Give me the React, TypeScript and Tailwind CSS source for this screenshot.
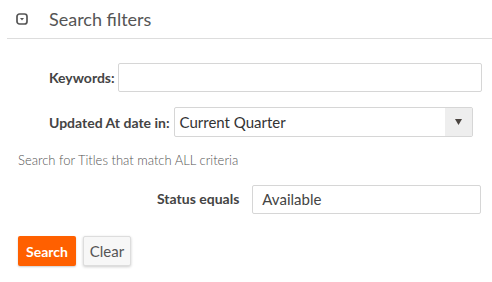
import React from 'react';

const font = { fontFamily: 'Lato, "Open Sans", sans-serif' };

function ToggleIcon() {
  return (
    <svg width="12" height="12" viewBox="0 0 12 12" className="shrink-0">
      <rect x="1" y="1" width="10" height="10" rx="2.5" fill="none" stroke="#555" strokeWidth="1.7" />
      <path d="M4 5 L8 5 L6 7.5 Z" fill="#555" />
    </svg>
  );
}

export default function App() {
  return (
    <div className="w-[492px] h-[282px] bg-white text-[#444]" style={font}>
      <div className="ml-[7px] h-[39px] border-b border-[#ddd] flex items-center">
        <div className="ml-[9px]">
          <ToggleIcon />
        </div>
        <h2 className="ml-[21px] text-[18px] text-[#555] font-normal">Search filters</h2>
      </div>

      <div className="pt-[24px] pl-[49px] flex flex-col">
        <div className="flex items-center gap-[3px] h-[29px]">
          <label className="text-[14px] font-bold text-[#444]">Keywords:</label>
          <input className="w-[364px] h-[29px] border border-[#d6d6d6] rounded-[2px] bg-white outline-none" />
        </div>

        <div className="flex items-center gap-[4px] h-[30px] mt-[15px]">
          <label className="text-[14px] font-bold text-[#444]">Updated At date in:</label>
          <div className="w-[299px] h-[30px] border border-[#d6d6d6] rounded-[2px] flex">
            <div className="flex-1 flex items-center pl-[5px] text-[15px] text-[#333]">Current Quarter</div>
            <div className="w-[27px] bg-[#eee] flex items-center justify-center">
              <svg width="7" height="6" viewBox="0 0 7 6">
                <path d="M0 0 L7 0 L3.5 6 Z" fill="#4a4440" />
              </svg>
            </div>
          </div>
        </div>
      </div>

      <p className="pl-[18px] mt-[15px] text-[13px] font-light text-[#555] leading-[17px]">
        Search for Titles that match ALL criteria
      </p>

      <div className="pl-[157px] mt-[16px] flex items-center gap-[13px] h-[29px]">
        <label className="text-[14px] font-bold text-[#444] mt-[-2px]">Status equals</label>
        <div className="w-[229px] h-[29px] border border-[#d6d6d6] rounded-[2px] flex items-center pl-[9px] text-[15px] text-[#444]">
          Available
        </div>
      </div>

      <div className="pl-[18px] mt-[22px] flex gap-[7px]">
        <button className="w-[58px] h-[30px] bg-[#ff6000] rounded-[2px] text-white text-[14px] font-bold shadow-[0_1px_2px_rgba(0,0,0,0.2)]">
          Search
        </button>
        <button className="w-[48px] h-[30px] bg-[#f7f7f7] border border-[#ddd] rounded-[2px] text-[#555] text-[15px] shadow-[0_1px_3px_rgba(0,0,0,0.2)]">
          Clear
        </button>
      </div>
    </div>
  );
}
